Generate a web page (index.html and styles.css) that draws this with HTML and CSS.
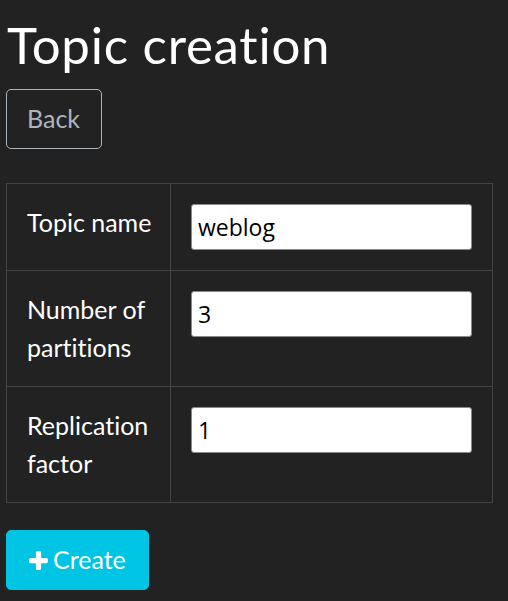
FILE: index.html
```html
<!DOCTYPE html>
<html lang="en">
<head>
<meta charset="utf-8">
<title>Topic creation</title>
<link rel="stylesheet" href="styles.css">
</head>
<body>
<main class="page">
  <h1 class="title">Topic creation</h1>
  <button class="btn btn-back" type="button">Back</button>
  <form class="form">
    <table class="topic-table">
      <colgroup>
        <col class="col-label">
        <col class="col-field">
      </colgroup>
      <tbody>
        <tr>
          <td class="label">Topic name</td>
          <td class="field"><input class="input" type="text" value="weblog"></td>
        </tr>
        <tr>
          <td class="label">Number of partitions</td>
          <td class="field"><input class="input" type="text" value="3"></td>
        </tr>
        <tr>
          <td class="label">Replication factor</td>
          <td class="field"><input class="input" type="text" value="1"></td>
        </tr>
      </tbody>
    </table>
    <button class="btn btn-create" type="button"><svg class="plus" viewBox="0 0 20 20" aria-hidden="true"><path d="M7.5 2.5 Q7.5 1 9 1 L11 1 Q12.5 1 12.5 2.5 L12.5 7.5 L17.5 7.5 Q19 7.5 19 9 L19 11 Q19 12.5 17.5 12.5 L12.5 12.5 L12.5 17.5 Q12.5 19 11 19 L9 19 Q7.5 19 7.5 17.5 L7.5 12.5 L2.5 12.5 Q1 12.5 1 11 L1 9 Q1 7.5 2.5 7.5 L7.5 7.5 Z" fill="currentColor"/></svg>Create</button>
  </form>
</main>
</body>
</html>
```

FILE: styles.css
```css
html, body {
  margin: 0;
  padding: 0;
  background: #222222;
}

body {
  font-family: Lato, "Open Sans", "Liberation Sans", sans-serif;
  font-variant-ligatures: none;
  color: #ffffff;
  font-size: 25px;
  line-height: 1.5;
}

.page {
  padding: 15px 15px 0 6px;
  display: flex;
  flex-direction: column;
  align-items: flex-start;
}

.title {
  margin: 0;
  font-size: 51px;
  font-weight: 400;
  line-height: 60px;
  padding-left: 1px;
  letter-spacing: 0.75px;
}

.btn {
  font-family: inherit;
  font-variant-ligatures: none;
  font-size: 25px;
  line-height: 37.5px;
  border-radius: 5px;
  cursor: pointer;
  display: inline-flex;
  align-items: center;
}

.btn-back {
  margin-top: 14px;
  background: transparent;
  color: #adb5bd;
  border: 1px solid #adb5bd;
  padding: 10px 21px 10px 20px;
  height: 60px;
}

.form {
  margin-top: 34px;
  width: 487px;
  display: flex;
  flex-direction: column;
  align-items: flex-start;
}

.topic-table {
  width: 487px;
  border-collapse: collapse;
  table-layout: fixed;
}

.col-label {
  width: 164px;
}

.topic-table td {
  border: 1px solid #444444;
  padding: 20px;
  vertical-align: top;
}

.topic-table td.label {
  padding-left: 20px;
  padding-right: 8px;
}

.input {
  box-sizing: border-box;
  width: 100%;
  height: 46px;
  margin: 0;
  padding: 0 6px;
  border: 1px solid #8a8a8a;
  border-radius: 3px;
  background: #ffffff;
  color: #000000;
  font-family: "Open Sans", "Liberation Sans", sans-serif;
  font-size: 23px;
  display: block;
}

.btn-create {
  margin-top: 27px;
  background: #00c4e4;
  color: #ffffff;
  border: 1px solid #00c4e4;
  height: 60px;
  padding: 10px 22px 10px 21px;
  gap: 4px;
}

.plus {
  width: 21px;
  height: 21px;
  display: block;
}
```
